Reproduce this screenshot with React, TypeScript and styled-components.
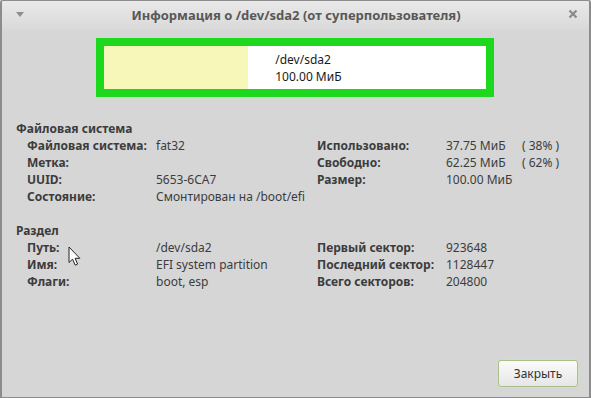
import React from 'react';
import styled, { createGlobalStyle } from 'styled-components';

const GlobalStyle = createGlobalStyle`
  html, body {
    margin: 0;
    padding: 0;
    background: #d6d6d6;
  }
  body {
    font-family: 'Noto Sans', 'Open Sans', sans-serif;
    font-size: 12px;
    color: #3c3c3c;
  }
`;

type Row = { label: string; value: string; extra?: string };

const fsLeft: Row[] = [
  { label: 'Файловая система:', value: 'fat32' },
  { label: 'Метка:', value: '' },
  { label: 'UUID:', value: '5653-6CA7' },
  { label: 'Состояние:', value: 'Смонтирован на /boot/efi' },
];

const fsRight: Row[] = [
  { label: 'Использовано:', value: '37.75 МиБ', extra: '( 38% )' },
  { label: 'Свободно:', value: '62.25 МиБ', extra: '( 62% )' },
  { label: 'Размер:', value: '100.00 МиБ' },
];

const partLeft: Row[] = [
  { label: 'Путь:', value: '/dev/sda2' },
  { label: 'Имя:', value: 'EFI system partition' },
  { label: 'Флаги:', value: 'boot, esp' },
];

const partRight: Row[] = [
  { label: 'Первый сектор:', value: '923648' },
  { label: 'Последний сектор:', value: '1128447' },
  { label: 'Всего секторов:', value: '204800' },
];

const InfoTable: React.FC<{ rows: Row[]; wide?: boolean }> = ({ rows, wide }) => (
  <Table $wide={wide}>
    {rows.map((r) => (
      <React.Fragment key={r.label}>
        <Label>{r.label}</Label>
        <Value>{r.value}</Value>
        {wide && <Value>{r.extra ?? ''}</Value>}
      </React.Fragment>
    ))}
  </Table>
);

const App: React.FC = () => {
  const used = 0.3775;
  return (
    <>
      <GlobalStyle />
      <Window>
        <TitleBar>
          <MenuArrow />
          <Title>Информация о /dev/sda2 (от суперпользователя)</Title>
          <CloseButton>
            <svg width="10" height="10" viewBox="0 0 10 10">
              <path d="M1.5 1.5 L8.5 8.5 M8.5 1.5 L1.5 8.5" stroke="#8a8a8a" strokeWidth="2.2" />
            </svg>
          </CloseButton>
        </TitleBar>

        <Body>
          <Frame>
            <Bar>
              <Fill style={{ width: `${used * 100}%` }} />
              <BarText>
                <div>/dev/sda2</div>
                <div>100.00 МиБ</div>
              </BarText>
            </Bar>
          </Frame>

          <Section>
            <Heading>Файловая система</Heading>
            <Columns>
              <InfoTable rows={fsLeft} />
              <InfoTable rows={fsRight} wide />
            </Columns>
          </Section>

          <Section>
            <Heading>Раздел</Heading>
            <Columns>
              <InfoTable rows={partLeft} />
              <InfoTable rows={partRight} />
            </Columns>
          </Section>

          <Footer>
            <Button>Закрыть</Button>
          </Footer>
        </Body>

        <Cursor width="13" height="21" viewBox="0 0 13 21">
          <path
            d="M1 1 L1 16.5 L4.6 13.2 L7.2 19.2 L9.6 18.1 L7.1 12.3 L11.8 12.3 Z"
            fill="#ffffff"
            stroke="#222222"
            strokeWidth="1"
            strokeLinejoin="round"
          />
        </Cursor>
      </Window>
    </>
  );
};

const Window = styled.div`
  position: relative;
  width: 591px;
  height: 398px;
  box-sizing: border-box;
  border: 1px solid #8c8c8c;
  border-left-width: 2px;
  border-right-width: 2px;
  border-radius: 3px 3px 0 0;
  background: #d6d6d6;
  display: flex;
  flex-direction: column;
  overflow: hidden;
`;

const TitleBar = styled.div`
  height: 29px;
  flex: none;
  display: flex;
  align-items: center;
  padding: 0 11px 0 14px;
  background: linear-gradient(#e9e9e9, #d9d9d9);
`;

const MenuArrow = styled.div`
  width: 0;
  height: 0;
  border-left: 4px solid transparent;
  border-right: 4px solid transparent;
  border-top: 5px solid #8e8e8e;
  margin-top: -2px;
`;

const Title = styled.div`
  flex: 1;
  text-align: center;
  font-weight: 700;
  font-size: 13px;
  color: #585858;
  margin-top: -2px;
`;

const CloseButton = styled.div`
  width: 10px;
  height: 10px;
  display: flex;
  margin-top: -3px;
`;

const Body = styled.div`
  flex: 1;
  display: flex;
  flex-direction: column;
  padding: 8px 11px 10px 14px;
`;

const Frame = styled.div`
  align-self: center;
  margin-left: -4px;
  width: 398px;
  height: 59px;
  box-sizing: border-box;
  border: 8px solid #1ed81e;
  background: #ffffff;
`;

const Bar = styled.div`
  display: flex;
  height: 100%;
`;

const Fill = styled.div`
  background: #f7f7b9;
  flex: none;
`;

const BarText = styled.div`
  display: flex;
  flex-direction: column;
  justify-content: center;
  padding-left: 27px;
  line-height: 17px;
  color: #1a1a1a;
`;

const Section = styled.div`
  margin-top: 23px;
  & + & {
    margin-top: 17px;
  }
`;

const Heading = styled.div`
  font-weight: 700;
  line-height: 17px;
`;

const Columns = styled.div`
  display: grid;
  grid-template-columns: 290px 1fr;
  padding-left: 11px;
`;

const Table = styled.div<{ $wide?: boolean }>`
  display: grid;
  grid-template-columns: ${(p) => (p.$wide ? '129px 76px auto' : '129px auto')};
  line-height: 17px;
  align-content: start;
`;

const Label = styled.div`
  font-weight: 700;
  white-space: nowrap;
`;

const Value = styled.div`
  white-space: nowrap;
  min-height: 17px;
`;

const Footer = styled.div`
  margin-top: auto;
  display: flex;
  justify-content: flex-end;
`;

const Button = styled.button`
  width: 80px;
  height: 27px;
  font-family: inherit;
  font-size: 12px;
  color: #333333;
  border: 1px solid #a9bf8c;
  border-radius: 3px;
  box-shadow: 0 0 0 1px #d3e0c0;
  background: linear-gradient(#fbfbfb, #e6e6e6);
  padding: 0;
`;

const Cursor = styled.svg`
  position: absolute;
  left: 66px;
  top: 245px;
  pointer-events: none;
`;

export default App;
